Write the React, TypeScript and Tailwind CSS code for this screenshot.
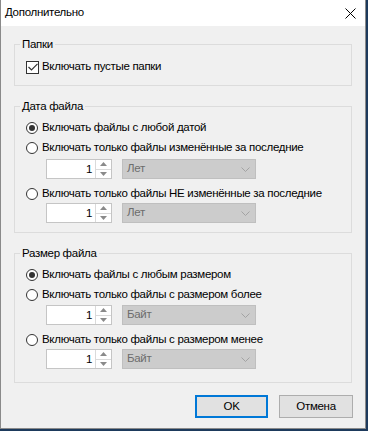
import React from 'react';

const font = { fontFamily: '"Segoe UI", "Liberation Sans", Arial, sans-serif' };

const Radio: React.FC<{ checked?: boolean; label: string }> = ({ checked, label }) => (
  <div className="flex items-center h-4 ml-[11px]">
    <span className="shrink-0 w-[12px] h-[12px] rounded-full border border-[#333333] bg-white flex items-center justify-center">
      {checked && <span className="w-[6px] h-[6px] rounded-full bg-[#333333]" />}
    </span>
    <span className="ml-[4px] whitespace-nowrap">{label}</span>
  </div>
);

const Spinner: React.FC<{ unit: string }> = ({ unit }) => (
  <div className="flex items-center ml-[31px] h-[20px]">
    <div className="flex w-[66px] h-[20px] border border-[#c5c5c5] bg-white">
      <span className="flex-1 text-right pr-[3px] leading-[18px]">1</span>
      <div className="w-[16px] flex flex-col border-l border-[#dadada]">
        <span className="flex-1 flex items-center justify-center border-b border-[#dadada]">
          <svg width="7" height="4" viewBox="0 0 7 4"><path d="M0 4 L3.5 0 L7 4 Z" fill="#8a8a8a" /></svg>
        </span>
        <span className="flex-1 flex items-center justify-center">
          <svg width="7" height="4" viewBox="0 0 7 4"><path d="M0 0 L3.5 4 L7 0 Z" fill="#8a8a8a" /></svg>
        </span>
      </div>
    </div>
    <div className="ml-[10px] w-[134px] h-[20px] border border-[#bfbfbf] bg-[#cccccc] flex items-center justify-between pl-[4px] pr-[5px] text-[#6d6d6d]">
      <span>{unit}</span>
      <svg width="9" height="5" viewBox="0 0 9 5"><path d="M0.5 0.5 L4.5 4.5 L8.5 0.5" stroke="#a3a3a3" fill="none" /></svg>
    </div>
  </div>
);

const Group: React.FC<{ title: string; className?: string; children: React.ReactNode }> = ({ title, className, children }) => (
  <div className={`border border-[#dcdcdc] mx-[13px] ${className ?? ''}`}>
    <div className="-mt-[9px] ml-[5px] px-[2px] bg-[#f0f0f0] w-fit leading-4">{title}</div>
    {children}
  </div>
);

export default function App() {
  return (
    <div className="w-[368px] h-[431px] bg-[#1d3a5c]" style={font}>
      <div className="w-[366px] h-[429px] bg-[#f0f0f0] border-x border-b border-[#8a8a8a] text-[11.5px] tracking-[-0.3px] text-black flex flex-col">
        <div className="h-[26px] bg-white flex items-center justify-between pl-[4px] pr-[9px] shrink-0">
          <span>Дополнительно</span>
          <svg width="11" height="11" viewBox="0 0 11 11">
            <path d="M0.5 0.5 L10.5 10.5 M10.5 0.5 L0.5 10.5" stroke="#000" strokeWidth="1" />
          </svg>
        </div>

        <Group title="Папки" className="mt-[18px] h-[42px]">
          <div className="flex items-center h-4 mt-[7px] ml-[11px]">
            <span className="shrink-0 w-[13px] h-[13px] border border-[#333333] bg-white flex items-center justify-center">
              <svg width="10" height="8" viewBox="0 0 10 8"><path d="M0.5 4 L3.5 7 L9.5 0.8" stroke="#333" strokeWidth="1.2" fill="none" /></svg>
            </span>
            <span className="ml-[3px]">Включать пустые папки</span>
          </div>
        </Group>

        <Group title="Дата файла" className="mt-[20px] h-[127px]">
          <div className="flex flex-col mt-[6px]">
            <Radio checked label="Включать файлы с любой датой" />
            <div className="mt-[4px]"><Radio label="Включать только файлы изменённые за последние" /></div>
            <div className="mt-[3px]"><Spinner unit="Лет" /></div>
            <div className="mt-[7px]"><Radio label="Включать только файлы НЕ изменённые за последние" /></div>
            <div className="mt-[1px]"><Spinner unit="Лет" /></div>
          </div>
        </Group>

        <Group title="Размер файла" className="mt-[20px] h-[130px]">
          <div className="flex flex-col mt-[6px]">
            <Radio checked label="Включать файлы с любым размером" />
            <div className="mt-[4px]"><Radio label="Включать только файлы с размером более" /></div>
            <div className="mt-[2px]"><Spinner unit="Байт" /></div>
            <div className="mt-[7px]"><Radio label="Включать только файлы с размером менее" /></div>
            <div className="mt-[1px]"><Spinner unit="Байт" /></div>
          </div>
        </Group>

        <div className="flex justify-end gap-[11px] mt-[12px] mr-[12px]">
          <button className="w-[73px] h-[23px] bg-[#e1e1e1] border-2 border-[#0078d7]">OK</button>
          <button className="w-[74px] h-[23px] bg-[#e1e1e1] border border-[#adadad]">Отмена</button>
        </div>
      </div>
    </div>
  );
}
